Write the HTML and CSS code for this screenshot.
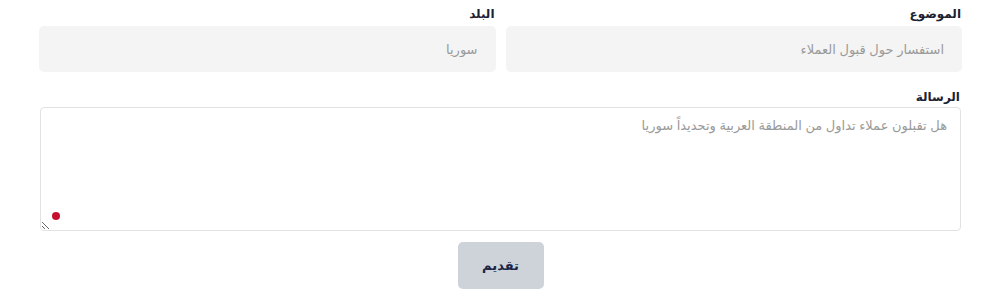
FILE: index.html
```html
<!DOCTYPE html>
<html lang="ar" dir="rtl">
<head>
    <meta charset="UTF-8">
    <meta name="viewport" content="width=device-width, initial-scale=1.0">
    <title>تواصل معنا</title>
    <link rel="stylesheet" href="styles.css">
</head>
<body>
    <form class="contact-form">
        <div class="row">
            <div class="form-group">
                <label for="subject">الموضوع</label>
                <input type="text" id="subject" placeholder="استفسار حول قبول العملاء">
            </div>
            <div class="form-group">
                <label for="country">البلد</label>
                <input type="text" id="country" placeholder="سوريا">
            </div>
        </div>

        <!-- الرسالة -->
        <div class="form-group message-group">
            <label for="message">الرسالة</label>
            <textarea id="message" placeholder="هل تقبلون عملاء تداول من المنطقة العربية وتحديداً سوريا"></textarea>
            <span class="dot"></span>
        </div>

        <div class="actions">
            <button type="button">تقديم</button>
        </div>
    </form>
</body>
</html>
```

FILE: styles.css
```css
body {
    font-family: Arial, "DejaVu Sans", sans-serif;
    margin: 0;
    padding: 0;
    background-color: #fff;
}

.contact-form {
    width: 923px;
    margin: 0 25px 0 0;
    padding-top: 6px;
}

.row {
    display: grid;
    grid-template-columns: 1fr 1fr;
    gap: 10px;
}

.form-group label {
    display: block;
    font-size: 12px;
    font-weight: 700;
    color: #1c2233;
    height: 20px;
    line-height: 16px;
    padding-right: 1px;
}

input {
    width: 100%;
    height: 46px;
    padding: 0 18px;
    border: none;
    border-radius: 5px;
    background-color: #f4f4f4;
    box-sizing: border-box;
    font-family: inherit;
    font-size: 13px;
    color: #333;
}

input::placeholder,
textarea::placeholder {
    color: #9a9a9a;
}

.message-group {
    position: relative;
    margin-top: 17px;
}

.message-group label {
    padding-right: 2px;
    height: 18px;
    line-height: 16px;
}

textarea {
    display: block;
    width: 921px;
    height: 124px;
    margin: 0 1px;
    padding: 10px 13px;
    border: 1px solid #e2e2e2;
    border-radius: 4px;
    box-sizing: border-box;
    font-family: inherit;
    font-size: 13px;
    color: #333;
    resize: vertical;
}

.dot {
    position: absolute;
    left: 13px;
    bottom: 11px;
    width: 8px;
    height: 8px;
    border-radius: 50%;
    background-color: #c8102e;
}

.actions {
    display: flex;
    justify-content: center;
    margin-top: 11px;
}

button {
    width: 86px;
    height: 47px;
    background-color: #cdd3d8;
    color: #1a2546;
    border: none;
    border-radius: 5px;
    font-family: inherit;
    font-size: 13px;
    font-weight: 700;
    cursor: pointer;
}
```
